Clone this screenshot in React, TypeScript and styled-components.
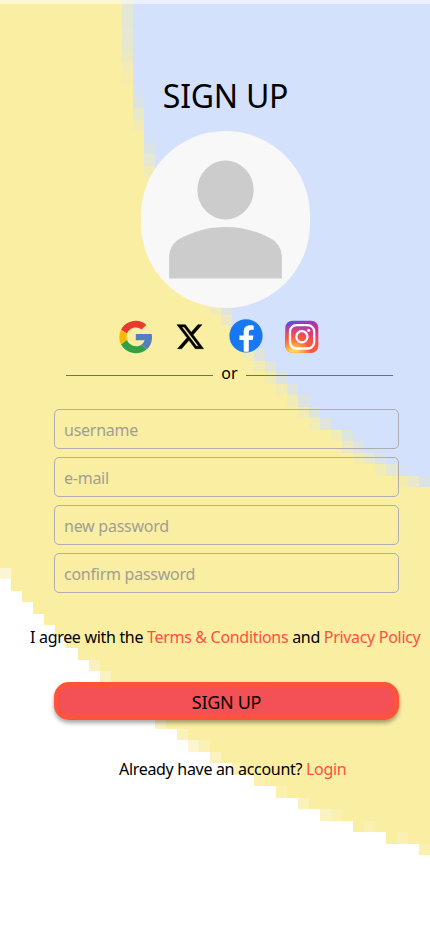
import React from "react";
import styled, { createGlobalStyle } from "styled-components";

const GlobalStyle = createGlobalStyle`
  * { box-sizing: border-box; }
  body {
    margin: 0;
    background: #fff;
    color: #000;
    font: 16px/24px "Noto Sans", "Open Sans", sans-serif;
  }
`;

const Page = styled.main`
  position: relative;
  width: 430px;
  height: 932px;
  overflow: hidden;
`;

const Backdrop = styled.svg`
  position: absolute;
  inset: 0;
  width: 430px;
  height: 932px;
`;

const Content = styled.div`
  position: relative;
  display: flex;
  flex-direction: column;
  padding: 72px 31px 0 54px;
`;

const Title = styled.h1`
  margin: 0 0 11px;
  height: 48px;
  font-size: 32px;
  line-height: 48px;
  font-weight: 400;
  text-align: center;
  letter-spacing: -0.25px;
  padding-right: 2px;
`;

const Avatar = styled.div`
  width: 169px;
  height: 177px;
  margin-left: 87px;
  border-radius: 100px;
  background: #f8f8f8;
  overflow: hidden;

  svg { display: block; width: 100%; height: 100%; }
`;

const Socials = styled.div`
  display: flex;
  height: 34px;
  margin: 11px 0 0 65px;
  gap: 21.2px;

  svg { display: block; flex: none; overflow: visible; }
`;

const Divider = styled.div`
  display: flex;
  align-items: center;
  gap: 8px;
  height: 24px;
  margin: 8px 6px 0 12px;
`;

const Rule = styled.span`
  flex: 1;
  height: 1px;
  margin-top: 4px;
  background: #6d7078;
`;

const Form = styled.form`
  display: flex;
  flex-direction: column;
`;

const Fields = styled.div`
  display: grid;
  gap: 8px;
  margin-top: 24px;
`;

const Field = styled.input`
  width: 100%;
  height: 40px;
  padding: 3px 9px 1px;
  border: 1px solid #adadb2;
  border-radius: 5px;
  background: transparent;
  font: inherit;
  letter-spacing: -0.25px;
  outline: none;

  &::placeholder { color: #a09e93; opacity: 1; }
`;

const Note = styled.p<{ $top: number; $shift: number }>`
  margin: ${(p) => p.$top}px -24px 0 ${(p) => p.$shift}px;
  white-space: nowrap;
  height: 24px;
  letter-spacing: -0.31px;
`;

const Link = styled.a`
  color: #ff5140;
`;

const Submit = styled.button`
  height: 38px;
  margin-top: 33px;
  padding: 2px 0 0;
  border: 5px solid #ff533c;
  border-radius: 15px;
  background: #f45156;
  color: #000;
  font: 18px/24px "Noto Sans", sans-serif;
  letter-spacing: -0.3px;
  box-shadow: 0 3px 4px rgba(0, 0, 0, 0.35);
`;

const YELLOW = "#faeea3";
const BLUE = "#d4e1fd";
const COL = 11.03;
const ROW = 11.496;
const TOP = 4.6;

const colX = (c: number) => Math.round(c * COL + 0.3);
const rowY = (r: number) => (r <= 0 ? 0 : Math.round(TOP + r * ROW));

// First blue column per mosaic row.
const blueStart = [
  12, 12, 12, 12, 12, 12, 12, 12, 13, 13, 13, 13, 14, 14, 14, 15, 15, 16, 16, 16, 17,
  17, 18, 18, 19, 20, 21, 21, 22, 23, 24, 25, 26, 27, 28, 29, 30, 32, 33, 35, 37, 39,
];

// First yellow column per mosaic row, from row 49 downwards.
const yellowStart = [
  0, 1, 2, 3, 4, 5, 6, 7, 8, 9, 10, 12, 13, 14, 16, 17, 19, 21, 23, 25, 27, 29, 32, 35, 38,
];

// Blended cells along both edges: [row, column, colour].
const blends: [number, number, string][] = [
  [0, 11, "#e3e8d6"], [1, 11, "#e3e8d6"], [2, 11, "#e4e8d4"], [3, 11, "#e6e8cd"],
  [4, 11, "#ece9c1"], [5, 11, "#f2ebb4"], [6, 11, "#f7eca9"],
  [7, 12, "#d6e1f5"], [8, 12, "#dbe4e4"], [9, 12, "#e8e8ca"], [10, 12, "#f3ebb3"],
  [11, 13, "#d5e1f7"], [12, 13, "#dbe4e3"], [13, 13, "#e3e7d3"], [14, 13, "#f1ebb8"],
  [26, 19, "#f1ebb8"], [26, 20, "#dfe5dc"], [27, 20, "#ece9c2"],
  [28, 21, "#ebe9c2"], [29, 22, "#dfe5dc"],
  [30, 22, "#f1ebb6"], [30, 23, "#dfe5da"], [31, 23, "#f1ebb6"], [31, 24, "#e1e6d8"],
  [32, 24, "#f1ebb6"], [32, 25, "#dde4e0"], [33, 25, "#f2ebb4"], [33, 26, "#dfe5dc"],
  [34, 26, "#f1ebb8"], [34, 27, "#dde4e0"], [35, 27, "#f2ebb4"], [35, 28, "#dfe5d8"],
  [36, 28, "#f1ebb8"], [36, 29, "#dfe5dc"], [37, 30, "#f1ebb4"], [37, 31, "#dee5dc"],
  [38, 31, "#ece9c2"], [38, 32, "#dde5de"], [39, 32, "#f3ebb2"], [39, 33, "#e7e8cc"],
  [39, 34, "#dae3e6"], [40, 34, "#f1ebb6"], [40, 35, "#e3e7d4"], [40, 36, "#d6e1f4"],
  [41, 36, "#f6ecaa"], [41, 37, "#e7e8cc"], [41, 38, "#dae3e4"],
  [49, 0, "#fcf5d3"], [57, 8, "#fbf1bf"], [58, 9, "#fbf2c4"],
  [62, 14, "#fbf2c4"], [63, 16, "#fbf1b9"], [64, 17, "#fcf5d0"], [64, 18, "#fbf0b6"],
  [65, 19, "#fbf2c0"], [66, 21, "#fbf1b8"], [67, 23, "#fbf0b0"], [68, 25, "#fbf0b2"],
  [69, 27, "#fbf1ba"], [70, 29, "#fbf2c4"], [70, 30, "#faf0b4"], [71, 33, "#faf0b2"],
  [72, 36, "#faf0b2"], [73, 38, "#fbf0b2"],
];

const Mosaic = () => (
  <Backdrop viewBox="0 0 430 932" shapeRendering="crispEdges" aria-hidden="true">
    <rect width="430" height={rowY(49)} fill={YELLOW} />
    {blueStart.map((c, r) => (
      <rect key={r} x={colX(c)} y={rowY(r)} width={430} height={rowY(r + 1) - rowY(r)} fill={BLUE} />
    ))}
    {yellowStart.map((c, i) => (
      <rect key={i} x={colX(c)} y={rowY(49 + i)} width={430} height={rowY(50 + i) - rowY(49 + i)} fill={YELLOW} />
    ))}
    {blends.map(([r, c, fill]) => (
      <rect key={`${r}-${c}`} x={colX(c)} y={rowY(r)} width={colX(c + 1) - colX(c)} height={rowY(r + 1) - rowY(r)} fill={fill} />
    ))}
    <rect width="430" height="4" fill="#fff" opacity="0.5" />
  </Backdrop>
);

const GoogleIcon = () => (
  <svg width="34" height="34" viewBox="0 -0.6 34 34">
    <path fill="#e83a2e" d="M2 10.2C4.8 4.7 10.4 1.2 16.8 1.2c4.1 0 7.7 1.5 10.5 4.1l-4.8 4.6c-1.4-1.3-3.3-2.1-5.7-2.1-4 0-7.3 2.5-8.6 6z" />
    <path fill="#fbb800" d="M2 10.2l6.1 4.3c-.6 1.9-.6 4.1 0 6L2 25c-2.3-4.6-2.3-10.2 0-14.8z" />
    <path fill="#34a045" d="M2 25l6.1-4.5c1.3 3.5 4.6 6.1 8.7 6.1 2.2 0 4-.5 5.500-1.500l5.500 4.500c-2.900 2.600-6.700 4-11 4-6.300 0-12-3.400-14.800-8.600z" />
    <path fill="#557ebf" d="M16.800 14.300h15.900c1.100 6.100-.7 11.800-4.900 15.300l-5.500-4.500c1.600-1.100 2.700-2.500 3.200-4.500h-8.700z" />
  </svg>
);

const XIcon = () => (
  <svg width="34" height="34" viewBox="0 0 34 34">
    <path
      transform="translate(3 4.400) scale(1.660)"
      stroke="#000"
      strokeWidth="0.300"
      d="M12.600.750h2.454l-5.360 6.142L16 15.250h-4.937l-3.867-5.070-4.425 5.070H.316l5.733-6.570L0 .750h5.063l3.495 4.633L12.601.750Zm-.860 13.028h1.360L4.323 2.145H2.865z"
    />
  </svg>
);

const FacebookIcon = () => (
  <svg width="34" height="34" viewBox="0 0 34 34">
    <circle cx="17" cy="16.800" r="16.600" fill="#1877f2" />
    <path fill="#fff" d="M14.700 32.400V21.100h-4.300v-4.600h4.300v-3.700c0-4.200 2.500-6.500 6.300-6.500 1.300 0 2.600.1 3.700.4v4h-2.100c-2.100 0-2.800 1.300-2.800 2.700v3.100h4.700l-.8 4.600h-3.900v11.300c-1.700.4-3.400.4-5.100 0z" />
  </svg>
);

const InstagramIcon = () => (
  <svg width="34" height="34" viewBox="0 -0.500 34 34">
    <defs>
      <linearGradient id="ig-base" x1="0" y1="0" x2="0.350" y2="1">
        <stop offset="0" stopColor="#4a5bdc" />
        <stop offset="0.300" stopColor="#a436bd" />
        <stop offset="0.650" stopColor="#e03080" />
        <stop offset="1" stopColor="#ff543f" />
      </linearGradient>
      <radialGradient id="ig-glow" cx="0.250" cy="1.050" r="0.950">
        <stop offset="0" stopColor="#ffdd55" />
        <stop offset="0.150" stopColor="#ffd551" />
        <stop offset="0.550" stopColor="#ff573e" />
        <stop offset="1" stopColor="#ff573e" stopOpacity="0" />
      </radialGradient>
    </defs>
    <rect x="0.300" y="1.300" width="33" height="32" rx="7" fill="url(#ig-base)" />
    <rect x="0.300" y="1.300" width="33" height="32" rx="7" fill="url(#ig-glow)" />
    <g fill="none" stroke="#fff" strokeWidth="2.300">
      <rect x="5" y="5.600" width="24.200" height="23.400" rx="6.500" />
      <circle cx="16.900" cy="17.300" r="5.600" />
    </g>
    <circle cx="23.700" cy="10.800" r="1.600" fill="#fff" />
  </svg>
);

const fields = ["username", "e-mail", "new password", "confirm password"];

export default function App() {
  return (
    <>
      <GlobalStyle />
      <Page>
        <Mosaic />
        <Content>
          <Title>SIGN UP</Title>
          <Avatar>
            <svg viewBox="0 0 24 24" preserveAspectRatio="none" fill="#ccc">
              <circle cx="12" cy="8" r="4" />
              <path d="M4 20v-2.900c0-1.080.58-2.020 1.560-2.530C7.300 13.650 9.500 13 12 13s4.700.650 6.440 1.570c.98.510 1.560 1.450 1.560 2.530V20z" />
            </svg>
          </Avatar>
          <Socials>
            <GoogleIcon />
            <XIcon />
            <FacebookIcon />
            <InstagramIcon />
          </Socials>
          <Divider>
            <Rule />
            <span>or</span>
            <Rule />
          </Divider>
          <Form>
            <Fields>
              {fields.map((name) => (
                <Field key={name} placeholder={name} aria-label={name} />
              ))}
            </Fields>
            <Note $top={32} $shift={-24}>
              I agree with the <Link>Terms &amp; Conditions</Link> and <Link>Privacy Policy</Link>
            </Note>
            <Submit type="button">SIGN UP</Submit>
            <Note $top={37} $shift={65}>
              Already have an account? <Link>Login</Link>
            </Note>
          </Form>
        </Content>
      </Page>
    </>
  );
}
